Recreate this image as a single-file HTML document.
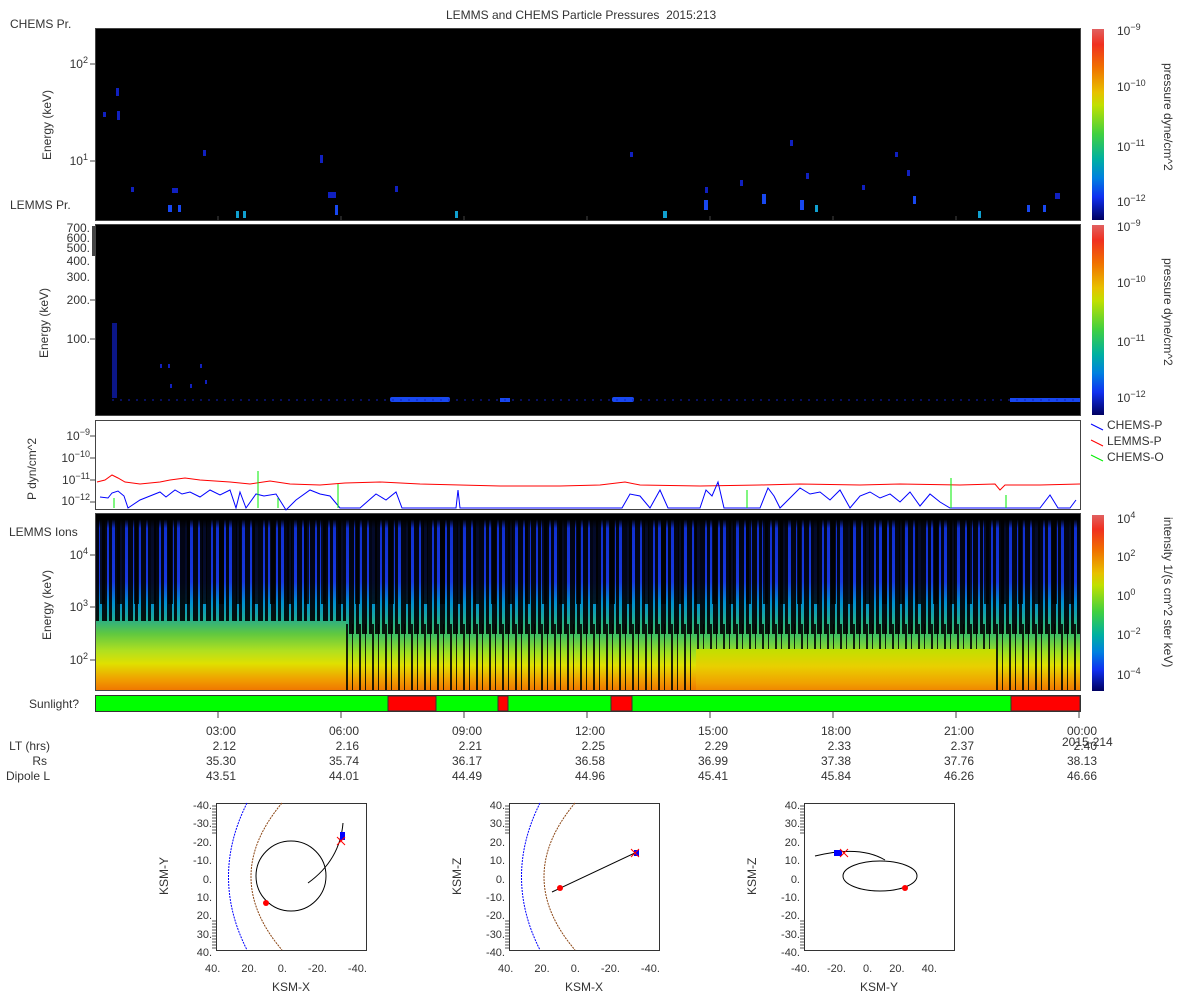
<!DOCTYPE html>
<html><head><meta charset="utf-8"><style>
body{margin:0;background:#fff;width:1200px;height:1000px;position:relative;overflow:hidden;font-family:"Liberation Sans",sans-serif;color:#333;font-size:12px}
.a{position:absolute}
.pan{position:absolute;background:#000;border:1px solid #444;box-sizing:border-box}
.cb{position:absolute;width:12px;background:linear-gradient(#e06060,#f03020 8%,#f07000 20%,#e8c000 33%,#c0e000 40%,#40d040 55%,#00b0a0 68%,#0080e0 78%,#1030f0 88%,#000060)}
.t{position:absolute;white-space:nowrap}
.r{text-align:right}
.vl{position:absolute;transform:rotate(-90deg);transform-origin:left top;white-space:nowrap}
.vr{position:absolute;transform:rotate(90deg);transform-origin:left top;white-space:nowrap}
sup{font-size:9px}
</style></head><body>
<div class="t" style="left:446px;top:8px">LEMMS and CHEMS Particle Pressures&nbsp; 2015:213</div>
<div class="t" style="left:10px;top:17px">CHEMS Pr.</div>
<div class="t" style="left:10px;top:198px">LEMMS Pr.</div>
<div class="t" style="left:9px;top:525px">LEMMS Ions</div>

<div class="pan" style="left:95px;top:28px;width:986px;height:193px"></div>
<div class="pan" style="left:95px;top:224px;width:986px;height:192px"></div>
<div class="pan" style="left:95px;top:513px;width:986px;height:178px;overflow:hidden">
 <div class="a" style="left:0;top:0;width:986px;height:178px;background:linear-gradient(#000 0%,#000 3%,#1030d0 8%,#1838e0 38%,#0090d0 50%,#20b090 60%,#40c060 68%,#a0e020 78%,#e0e000 85%,#f0a000 93%,#f07000 100%)"></div>
 <div class="a" style="left:0;top:0;width:986px;height:120px;background:repeating-linear-gradient(90deg,rgba(0,0,0,.9) 0 3px,transparent 3px 6px,rgba(0,0,0,.9) 6px 11px,transparent 11px 13px)"></div>
 <div class="a" style="left:0;top:0;width:986px;height:90px;background:repeating-linear-gradient(90deg,transparent 0 4px,rgba(0,0,0,.8) 4px 9px,transparent 9px 17px)"></div>
 <div class="a" style="left:250px;top:110px;width:736px;height:68px;background:repeating-linear-gradient(90deg,rgba(0,0,0,.85) 0 2px,transparent 2px 6px,rgba(0,0,0,.85) 6px 7px,transparent 7px 13px)"></div>
 <div class="a" style="left:0;top:107px;width:250px;height:71px;background:linear-gradient(#30b080,#60c840 18%,#b0e020 42%,#e0e000 60%,#f0a000 82%,#f07000)"></div>
 <div class="a" style="left:600px;top:135px;width:300px;height:43px;background:linear-gradient(#c0e000,#e8d000 40%,#f0a000 80%,#f08000)"></div>
</div>

<div class="a" style="left:95px;top:420px;width:986px;height:90px;border:1px solid #444;box-sizing:border-box;background:#fff"></div>

<div class="cb" style="left:1092px;top:29px;height:191px"></div>
<div class="cb" style="left:1092px;top:225px;height:190px"></div>
<div class="cb" style="left:1092px;top:515px;height:176px"></div>

<svg class="a" style="left:0;top:0" width="1200" height="1000">
 <g stroke="#444" stroke-width="1">
  <line x1="90" y1="64" x2="95" y2="64"/><line x1="90" y1="161" x2="95" y2="161"/>
  <line x1="90" y1="339" x2="95" y2="339"/><line x1="90" y1="300" x2="95" y2="300"/>
  <line x1="90" y1="555" x2="95" y2="555"/><line x1="90" y1="607" x2="95" y2="607"/><line x1="90" y1="660" x2="95" y2="660"/>
  <line x1="90" y1="436" x2="95" y2="436"/><line x1="90" y1="458" x2="95" y2="458"/><line x1="90" y1="480" x2="95" y2="480"/><line x1="90" y1="502" x2="95" y2="502"/>
 </g>
 <rect x="92" y="226" width="3" height="30" fill="#444"/>
 <g fill="#1020c0">
  <rect x="103" y="112" width="3" height="5"/><rect x="116" y="88" width="3" height="8"/><rect x="117" y="111" width="3" height="9"/>
  <rect x="131" y="187" width="3" height="5"/><rect x="172" y="188" width="6" height="5"/><rect x="203" y="150" width="3" height="6"/>
  <rect x="320" y="155" width="3" height="8"/><rect x="328" y="192" width="8" height="6"/><rect x="395" y="186" width="3" height="6"/>
  <rect x="630" y="152" width="3" height="5"/><rect x="705" y="187" width="3" height="6"/><rect x="790" y="140" width="3" height="6"/>
  <rect x="806" y="173" width="3" height="6"/><rect x="895" y="152" width="3" height="5"/><rect x="907" y="170" width="3" height="6"/>
  <rect x="1055" y="193" width="5" height="6"/><rect x="862" y="185" width="3" height="5"/><rect x="740" y="180" width="3" height="6"/>
  <rect x="112" y="323" width="5" height="75" opacity=".7"/>
  <rect x="160" y="364" width="2" height="4"/><rect x="168" y="364" width="2" height="4"/><rect x="200" y="364" width="2" height="4"/><rect x="205" y="380" width="2" height="4"/><rect x="170" y="384" width="2" height="4"/><rect x="190" y="384" width="2" height="4"/>
 </g>
 <g fill="#1848f0">
  <rect x="168" y="205" width="4" height="7"/><rect x="178" y="205" width="3" height="7"/><rect x="335" y="205" width="3" height="10"/>
  <rect x="704" y="200" width="4" height="10"/><rect x="762" y="194" width="4" height="10"/><rect x="800" y="200" width="4" height="10"/>
  <rect x="913" y="196" width="3" height="8"/><rect x="1027" y="205" width="3" height="7"/><rect x="1043" y="205" width="3" height="7"/>
  <rect x="390" y="397" width="60" height="5" rx="2"/><rect x="612" y="397" width="22" height="5" rx="2"/><rect x="500" y="398" width="10" height="4"/>
  <rect x="1010" y="398" width="70" height="4"/>
 </g>
 <g fill="#10a0d0"><rect x="236" y="211" width="3" height="7"/><rect x="243" y="211" width="3" height="7"/><rect x="455" y="211" width="3" height="7"/><rect x="663" y="211" width="4" height="7"/><rect x="815" y="205" width="3" height="7"/><rect x="978" y="211" width="3" height="7"/></g>
 <line x1="112" y1="400" x2="1080" y2="400" stroke="#1020c0" stroke-dasharray="2 6"/>
 <g stroke="#444">
  <line x1="218" y1="216" x2="218" y2="221"/><line x1="341" y1="216" x2="341" y2="221"/><line x1="464" y1="216" x2="464" y2="221"/><line x1="587" y1="216" x2="587" y2="221"/><line x1="710" y1="216" x2="710" y2="221"/><line x1="833" y1="216" x2="833" y2="221"/><line x1="956" y1="216" x2="956" y2="221"/>
 </g>
 <polyline fill="none" stroke="#f00" stroke-width="1" points="97,482 105,480 112,475 118,478 125,482 140,484 160,482 170,480 185,478 200,480 230,482 250,484 270,481 290,484 320,485 345,483 380,482 420,484 460,485 500,486 560,486 600,485 625,482 640,485 700,486 760,485 800,484 860,485 900,484 960,485 995,484 1000,490 1005,485 1040,485 1080,484"/>
 <polyline fill="none" stroke="#00f" stroke-width="1" points="100,497 108,498 112,493 118,491 124,496 128,508 140,500 150,496 160,492 166,497 175,490 182,494 190,492 200,497 210,490 220,495 230,490 236,508 240,492 246,508 256,494 264,496 276,494 286,510 296,500 310,490 320,494 330,496 340,508 360,508 376,494 386,500 396,492 402,508 456,508 458,490 460,508 622,508 630,494 640,496 650,508 660,490 668,508 700,508 706,490 712,496 718,482 724,508 760,508 768,488 774,496 780,508 800,488 810,494 820,492 830,500 840,490 850,508 860,496 870,492 880,498 890,494 900,502 910,492 920,506 930,494 940,502 950,508 1040,508 1050,495 1058,508 1070,508 1076,500"/>
 <g stroke="#0e0"><line x1="114" y1="508" x2="114" y2="498"/><line x1="258" y1="508" x2="258" y2="471"/><line x1="338" y1="508" x2="338" y2="484"/><line x1="747" y1="508" x2="747" y2="490"/><line x1="951" y1="508" x2="951" y2="478"/><line x1="1006" y1="508" x2="1006" y2="495"/><line x1="278" y1="508" x2="278" y2="498"/></g>
 <line x1="1091" y1="424" x2="1103" y2="430" stroke="#00f"/><line x1="1091" y1="440" x2="1103" y2="446" stroke="#f00"/><line x1="1091" y1="455" x2="1103" y2="461" stroke="#0e0"/>
 <rect x="95.5" y="695.5" width="985" height="16" fill="#0f0" stroke="#333"/>
 <g fill="#f00" stroke="#333"><rect x="388" y="696" width="48" height="15"/><rect x="498" y="696" width="10" height="15"/><rect x="611" y="696" width="21" height="15"/><rect x="1011" y="696" width="69" height="15"/></g>
 <g stroke="#444"><line x1="218" y1="712" x2="218" y2="718"/><line x1="341" y1="712" x2="341" y2="718"/><line x1="464" y1="712" x2="464" y2="718"/><line x1="587" y1="712" x2="587" y2="718"/><line x1="710" y1="712" x2="710" y2="718"/><line x1="833" y1="712" x2="833" y2="718"/><line x1="956" y1="712" x2="956" y2="718"/><line x1="1079" y1="712" x2="1079" y2="718"/></g>
 <g fill="none" stroke="#333">
  <rect x="216.5" y="803.5" width="150" height="147"/><rect x="509.5" y="803.5" width="150" height="147"/><rect x="804.5" y="803.5" width="150" height="147"/>
 </g>
 <g stroke="#555">
  <path d="M212,806h4M212,809h4M212,812h4M212,815h4M212,818h4M212,821h4M212,824h4M212,827h4M212,830h4M212,833h4M212,921h4M212,924h4M212,927h4M212,930h4M212,933h4M212,936h4M212,939h4M212,942h4M212,945h4M212,948h4"/>
  <path d="M505,806h4M505,809h4M505,812h4M505,815h4M505,818h4M505,821h4M505,824h4M505,827h4M505,830h4M505,833h4M505,921h4M505,924h4M505,927h4M505,930h4M505,933h4M505,936h4M505,939h4M505,942h4M505,945h4M505,948h4"/>
  <path d="M800,806h4M800,809h4M800,812h4M800,815h4M800,818h4M800,821h4M800,824h4M800,827h4M800,830h4M800,833h4M800,921h4M800,924h4M800,927h4M800,930h4M800,933h4M800,936h4M800,939h4M800,942h4M800,945h4M800,948h4"/>
 </g>
 <g fill="none">
  <path d="M247,803 Q210,877 247,950" stroke="#00f" stroke-dasharray="2 1"/>
  <path d="M282,803 Q220,877 282,950" stroke="#8b4513" stroke-dasharray="2 1"/>
  <circle cx="291" cy="876" r="35" stroke="#000"/>
  <path d="M308,883 Q340,860 343,823" stroke="#000"/>
  <path d="M540,803 Q503,877 540,950" stroke="#00f" stroke-dasharray="2 1"/>
  <path d="M575,803 Q513,877 575,950" stroke="#8b4513" stroke-dasharray="2 1"/>
  <line x1="552" y1="892" x2="637" y2="852" stroke="#000"/>
  <ellipse cx="880" cy="876" rx="37" ry="15" stroke="#000"/>
  <path d="M815,856 Q860,845 885,860" stroke="#000"/>
 </g>
 <g fill="#00f"><rect x="340" y="832" width="5" height="8"/><rect x="634" y="850" width="5" height="6"/><rect x="834" y="850" width="8" height="6"/></g>
 <g fill="#f00"><circle cx="266" cy="903" r="3"/><circle cx="560" cy="888" r="3"/><circle cx="905" cy="888" r="3"/></g>
 <g stroke="#f00" stroke-width="1"><path d="M337,837l8,8M345,837l-8,8M631,849l8,8M639,849l-8,8M840,849l8,8M848,849l-8,8"/></g>
</svg>

<div class="t r" style="left:40px;top:55px;width:48px">10<sup>2</sup></div>
<div class="t r" style="left:40px;top:152px;width:48px">10<sup>1</sup></div>
<div class="vl" style="left:40px;top:160px">Energy (keV)</div>
<div class="t r" style="left:30px;top:223px;width:60px;line-height:10px;font-size:12px">700.<br>600.<br>500.</div>
<div class="t r" style="left:30px;top:254px;width:60px">400.</div>
<div class="t r" style="left:30px;top:270px;width:60px">300.</div>
<div class="t r" style="left:30px;top:293px;width:60px">200.</div>
<div class="t r" style="left:30px;top:332px;width:60px">100.</div>
<div class="vl" style="left:37px;top:358px">Energy (keV)</div>
<div class="t r" style="left:40px;top:427px;width:50px">10<sup>−9</sup></div>
<div class="t r" style="left:30px;top:449px;width:60px">10<sup>−10</sup></div>
<div class="t r" style="left:30px;top:471px;width:60px">10<sup>−11</sup></div>
<div class="t r" style="left:30px;top:492px;width:60px">10<sup>−12</sup></div>
<div class="vl" style="left:25px;top:500px">P dyn/cm^2</div>
<div class="t r" style="left:40px;top:546px;width:48px">10<sup>4</sup></div>
<div class="t r" style="left:40px;top:598px;width:48px">10<sup>3</sup></div>
<div class="t r" style="left:40px;top:651px;width:48px">10<sup>2</sup></div>
<div class="vl" style="left:40px;top:640px">Energy (keV)</div>
<div class="t" style="left:29px;top:697px">Sunlight?</div>

<div class="t" style="left:1117px;top:22px">10<sup>−9</sup></div>
<div class="t" style="left:1117px;top:78px">10<sup>−10</sup></div>
<div class="t" style="left:1117px;top:138px">10<sup>−11</sup></div>
<div class="t" style="left:1117px;top:193px">10<sup>−12</sup></div>
<div class="vr" style="left:1175px;top:63px">pressure dyne/cm^2</div>
<div class="t" style="left:1117px;top:218px">10<sup>−9</sup></div>
<div class="t" style="left:1117px;top:274px">10<sup>−10</sup></div>
<div class="t" style="left:1117px;top:333px">10<sup>−11</sup></div>
<div class="t" style="left:1117px;top:389px">10<sup>−12</sup></div>
<div class="vr" style="left:1175px;top:258px">pressure dyne/cm^2</div>
<div class="t" style="left:1107px;top:418px">CHEMS-P</div>
<div class="t" style="left:1107px;top:434px">LEMMS-P</div>
<div class="t" style="left:1107px;top:450px">CHEMS-O</div>
<div class="t" style="left:1117px;top:510px">10<sup>4</sup></div>
<div class="t" style="left:1117px;top:548px">10<sup>2</sup></div>
<div class="t" style="left:1117px;top:587px">10<sup>0</sup></div>
<div class="t" style="left:1117px;top:626px">10<sup>−2</sup></div>
<div class="t" style="left:1117px;top:666px">10<sup>−4</sup></div>
<div class="vr" style="left:1175px;top:517px">intensity 1/(s cm^2 ster keV)</div>

<div class="t r" style="left:0;top:739px;width:50px">LT (hrs)</div>
<div class="t r" style="left:0;top:754px;width:47px">Rs</div>
<div class="t r" style="left:0;top:769px;width:50px">Dipole L</div>
<div class="t" style="left:200px;top:724px;line-height:15px;text-align:right;width:36px">03:00<br>2.12<br>35.30<br>43.51</div>
<div class="t" style="left:323px;top:724px;line-height:15px;text-align:right;width:36px">06:00<br>2.16<br>35.74<br>44.01</div>
<div class="t" style="left:446px;top:724px;line-height:15px;text-align:right;width:36px">09:00<br>2.21<br>36.17<br>44.49</div>
<div class="t" style="left:569px;top:724px;line-height:15px;text-align:right;width:36px">12:00<br>2.25<br>36.58<br>44.96</div>
<div class="t" style="left:692px;top:724px;line-height:15px;text-align:right;width:36px">15:00<br>2.29<br>36.99<br>45.41</div>
<div class="t" style="left:815px;top:724px;line-height:15px;text-align:right;width:36px">18:00<br>2.33<br>37.38<br>45.84</div>
<div class="t" style="left:938px;top:724px;line-height:15px;text-align:right;width:36px">21:00<br>2.37<br>37.76<br>46.26</div>
<div class="t" style="left:1061px;top:724px;line-height:15px;text-align:right;width:36px">00:00<br>2.40<br>38.13<br>46.66</div>
<div class="t" style="left:1062px;top:735px">2015-214</div>

<div class="t r" style="left:170px;top:797px;width:42px;line-height:18.4px;font-size:11px">-40.<br>-30.<br>-20.<br>-10.<br>0.<br>10.<br>20.<br>30.<br>40.</div>
<div class="t" style="left:205px;top:963px;font-size:11px;word-spacing:18px">40. 20. 0. -20. -40.</div>
<div class="t" style="left:272px;top:980px">KSM-X</div>
<div class="vl" style="left:157px;top:895px">KSM-Y</div>
<div class="t r" style="left:463px;top:797px;width:42px;line-height:18.4px;font-size:11px">40.<br>30.<br>20.<br>10.<br>0.<br>-10.<br>-20.<br>-30.<br>-40.</div>
<div class="t" style="left:498px;top:963px;font-size:11px;word-spacing:18px">40. 20. 0. -20. -40.</div>
<div class="t" style="left:565px;top:980px">KSM-X</div>
<div class="vl" style="left:450px;top:895px">KSM-Z</div>
<div class="t r" style="left:758px;top:797px;width:42px;line-height:18.4px;font-size:11px">40.<br>30.<br>20.<br>10.<br>0.<br>-10.<br>-20.<br>-30.<br>-40.</div>
<div class="t" style="left:791px;top:963px;font-size:11px;word-spacing:14px">-40. -20. 0. 20. 40.</div>
<div class="t" style="left:860px;top:980px">KSM-Y</div>
<div class="vl" style="left:745px;top:895px">KSM-Z</div>
</body></html>
